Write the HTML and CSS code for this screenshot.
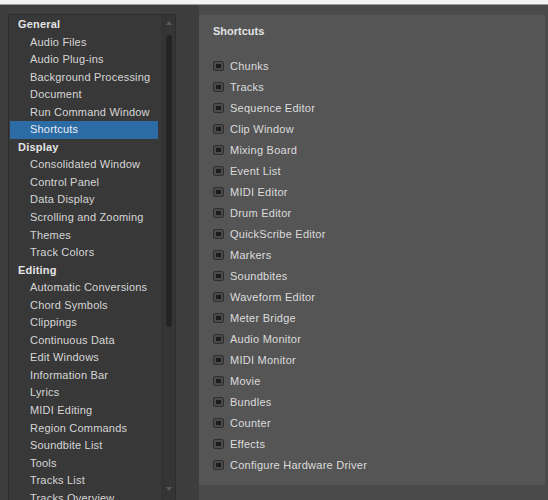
FILE: index.html
```html
<!DOCTYPE html>
<html>
<head>
<meta charset="utf-8">
<title>Preferences</title>
<link rel="stylesheet" href="styles.css">
</head>
<body>
<div class="topstrip"></div>
<div class="window">
  <aside class="sidebar">
    <div class="listbox">
      <ul class="list">
        <li class="group">General</li>
        <li class="item">Audio Files</li>
        <li class="item">Audio Plug-ins</li>
        <li class="item">Background Processing</li>
        <li class="item">Document</li>
        <li class="item">Run Command Window</li>
        <li class="item selected">Shortcuts</li>
        <li class="group">Display</li>
        <li class="item">Consolidated Window</li>
        <li class="item">Control Panel</li>
        <li class="item">Data Display</li>
        <li class="item">Scrolling and Zooming</li>
        <li class="item">Themes</li>
        <li class="item">Track Colors</li>
        <li class="group">Editing</li>
        <li class="item">Automatic Conversions</li>
        <li class="item">Chord Symbols</li>
        <li class="item">Clippings</li>
        <li class="item">Continuous Data</li>
        <li class="item">Edit Windows</li>
        <li class="item">Information Bar</li>
        <li class="item">Lyrics</li>
        <li class="item">MIDI Editing</li>
        <li class="item">Region Commands</li>
        <li class="item">Soundbite List</li>
        <li class="item">Tools</li>
        <li class="item">Tracks List</li>
        <li class="item">Tracks Overview</li>
      </ul>
      <div class="scrollbar">
        <span class="arrow up"></span>
        <span class="thumb"></span>
        <span class="arrow down"></span>
      </div>
    </div>
  </aside>
  <main class="panel">
    <div class="panel-body">
      <h2 class="title">Shortcuts</h2>
      <ul class="checks">
        <li><span class="box"></span>Chunks</li>
        <li><span class="box"></span>Tracks</li>
        <li><span class="box"></span>Sequence Editor</li>
        <li><span class="box"></span>Clip Window</li>
        <li><span class="box"></span>Mixing Board</li>
        <li><span class="box"></span>Event List</li>
        <li><span class="box"></span>MIDI Editor</li>
        <li><span class="box"></span>Drum Editor</li>
        <li><span class="box"></span>QuickScribe Editor</li>
        <li><span class="box"></span>Markers</li>
        <li><span class="box"></span>Soundbites</li>
        <li><span class="box"></span>Waveform Editor</li>
        <li><span class="box"></span>Meter Bridge</li>
        <li><span class="box"></span>Audio Monitor</li>
        <li><span class="box"></span>MIDI Monitor</li>
        <li><span class="box"></span>Movie</li>
        <li><span class="box"></span>Bundles</li>
        <li><span class="box"></span>Counter</li>
        <li><span class="box"></span>Effects</li>
        <li><span class="box"></span>Configure Hardware Driver</li>
      </ul>
    </div>
  </main>
</div>
</body>
</html>
```

FILE: styles.css
```css
* { box-sizing: border-box; }

html, body {
  margin: 0;
  padding: 0;
  background: #3e3e3e;
  font-family: "Liberation Sans", Arial, sans-serif;
  font-size: 11px;
  overflow: hidden;
}

.topstrip {
  height: 5px;
  background: #f4f4f4;
  border-bottom: 1px solid #9a9a9a;
}

.window {
  display: flex;
  height: 495px;
  background: #3e3e3e;
}

/* left navigation list */
.sidebar {
  width: 199px;
  flex: none;
  padding: 9px 0 0 8px;
}

.listbox {
  display: flex;
  width: 168px;
  height: 100%;
  background: #383838;
  border: 1px solid #2d2d2d;
  border-bottom: none;
  overflow: hidden;
}

.list {
  list-style: none;
  margin: 0;
  padding: 1px 0 0;
  flex: 1;
  min-width: 0;
}

.list li {
  height: 17.55px;
  line-height: 17.55px;
  white-space: nowrap;
  overflow: hidden;
  color: #d6d6d6;
  letter-spacing: 0.2px;
}

.list .group {
  padding-left: 9px;
  font-weight: bold;
  color: #e4e4e4;
}

.list .item {
  padding-left: 21px;
}

.list .selected {
  background: #2d6ba4;
  color: #e8eef5;
  margin: 0 4px 0 1px;
  padding-left: 20px;
}

.scrollbar {
  position: relative;
  width: 13px;
  flex: none;
  background: #353535;
  border-left: 1px solid #303030;
}

.scrollbar .thumb {
  position: absolute;
  left: 3px;
  top: 20px;
  width: 6px;
  height: 292px;
  border-radius: 3px;
  background: #242424;
}

.scrollbar .arrow {
  position: absolute;
  left: 3px;
  width: 0;
  height: 0;
  border-left: 3px solid transparent;
  border-right: 3px solid transparent;
}

.scrollbar .up {
  top: 6px;
  border-bottom: 4px solid #5a5a5a;
}

.scrollbar .down {
  top: 472px;
  border-top: 4px solid #5a5a5a;
}

/* right settings panel */
.panel {
  flex: 1;
  display: flex;
  flex-direction: column;
  background: #4a4a4a;
  padding: 10px 3px 15px 0;
}

.panel-body {
  flex: 1;
  background: #555555;
  padding: 9px 0 0 14px;
}

.title {
  margin: 0;
  font-size: 11px;
  font-weight: bold;
  line-height: 14px;
  color: #e2e2e2;
}

.checks {
  list-style: none;
  margin: 17px 0 0;
  padding: 0;
}

.checks li {
  display: flex;
  align-items: center;
  height: 21px;
  color: #dcdcdc;
  letter-spacing: 0.25px;
}

.box {
  position: relative;
  width: 11px;
  height: 10px;
  margin-right: 6px;
  border: 1px solid #2e2e2e;
  border-radius: 2px;
  background: #4a4a4a;
  flex: none;
}

.box::after {
  content: "";
  position: absolute;
  left: 2px;
  top: 2px;
  width: 5px;
  height: 4px;
  background: #1c1c1c;
}
```
